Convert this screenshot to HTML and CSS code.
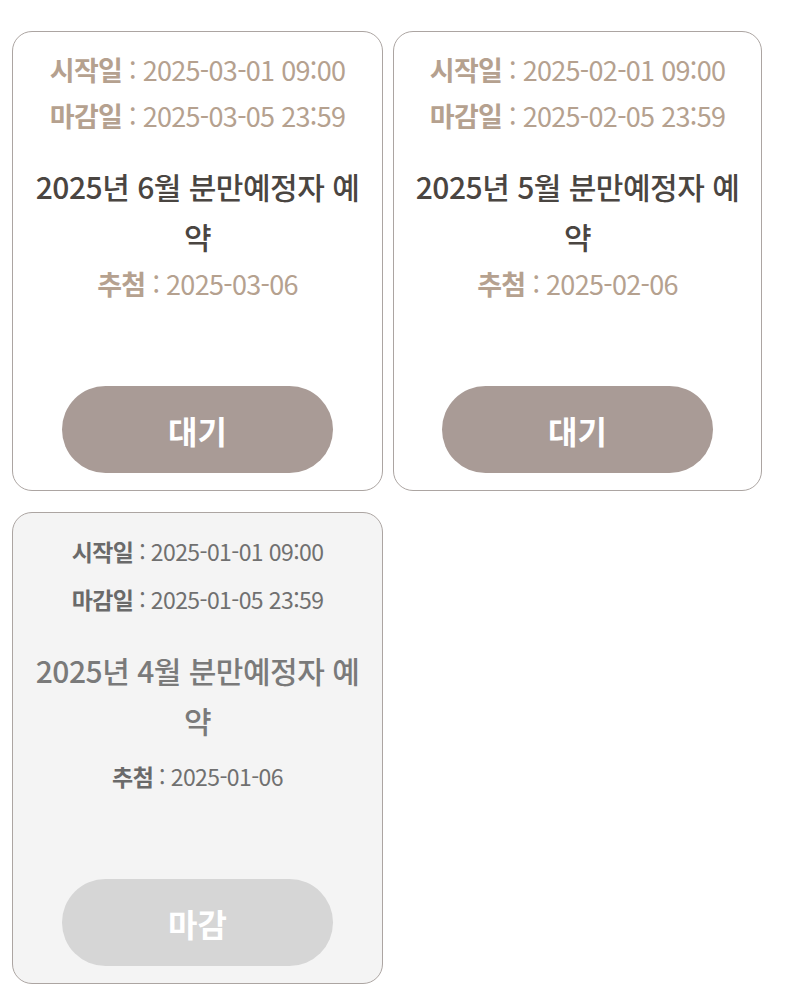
FILE: index.html
```html
<!DOCTYPE html>
<html lang="ko">
<head>
<meta charset="utf-8">
<link rel="stylesheet" href="styles.css">
</head>
<body>
<div class="grid">
  <div class="card">
    <p class="meta"><b>시작일</b> : 2025-03-01 09:00</p>
    <p class="meta"><b>마감일</b> : 2025-03-05 23:59</p>
    <h2 class="title">2025년 6월 분만예정자 예약</h2>
    <p class="meta draw"><b>추첨</b> : 2025-03-06</p>
    <button class="btn">대기</button>
  </div>
  <div class="card">
    <p class="meta"><b>시작일</b> : 2025-02-01 09:00</p>
    <p class="meta"><b>마감일</b> : 2025-02-05 23:59</p>
    <h2 class="title">2025년 5월 분만예정자 예약</h2>
    <p class="meta draw"><b>추첨</b> : 2025-02-06</p>
    <button class="btn">대기</button>
  </div>
  <div class="card closed">
    <p class="meta"><b>시작일</b> : 2025-01-01 09:00</p>
    <p class="meta"><b>마감일</b> : 2025-01-05 23:59</p>
    <h2 class="title">2025년 4월 분만예정자 예약</h2>
    <p class="meta draw"><b>추첨</b> : 2025-01-06</p>
    <button class="btn">마감</button>
  </div>
</div>
</body>
</html>
```
FILE: styles.css
```css
html, body {
  margin: 0;
  padding: 0;
  background: #ffffff;
}
body {
  font-family: "Noto Sans CJK KR", "Noto Sans", sans-serif;
}
.grid {
  display: grid;
  grid-template-columns: 371px 369px;
  column-gap: 10px;
  row-gap: 21px;
  padding: 31px 0 0 12px;
  align-items: start;
}
.card {
  box-sizing: border-box;
  border: 1.5px solid #aca5a2;
  border-radius: 20px;
  background: #ffffff;
  padding: 15px 14px 17px;
  display: flex;
  flex-direction: column;
  align-items: center;
  text-align: center;
}
.meta {
  margin: 0;
  font-size: 27px;
  line-height: 46px;
  letter-spacing: -0.7px;
  color: #b5a18f;
  font-weight: 400;
}
.meta b {
  font-weight: 700;
}
.title {
  margin: 22px 0 0;
  font-size: 30px;
  line-height: 50px;
  font-weight: 500;
  letter-spacing: -0.5px;
  color: #4a4541;
}
.draw {
  margin-top: 0;
}
.btn {
  margin-top: 79px;
  width: 271px;
  height: 87px;
  border: none;
  border-radius: 44px;
  background: #a99b96;
  color: #ffffff;
  font-family: "Noto Sans CJK KR", "Noto Sans", sans-serif;
  font-size: 32px;
  font-weight: 700;
  padding: 0;
}
.closed {
  background: #f4f4f4;
  padding-top: 14px;
}
.closed .meta {
  font-size: 23px;
  line-height: 48px;
  color: #707070;
  letter-spacing: -0.6px;
}
.closed .meta b {
  color: #6a6a6a;
}
.closed .title {
  margin-top: 22px;
  color: #7a7a7a;
}
.closed .draw {
  margin-top: 7px;
}
.closed .btn {
  background: #d6d6d6;
}
```
